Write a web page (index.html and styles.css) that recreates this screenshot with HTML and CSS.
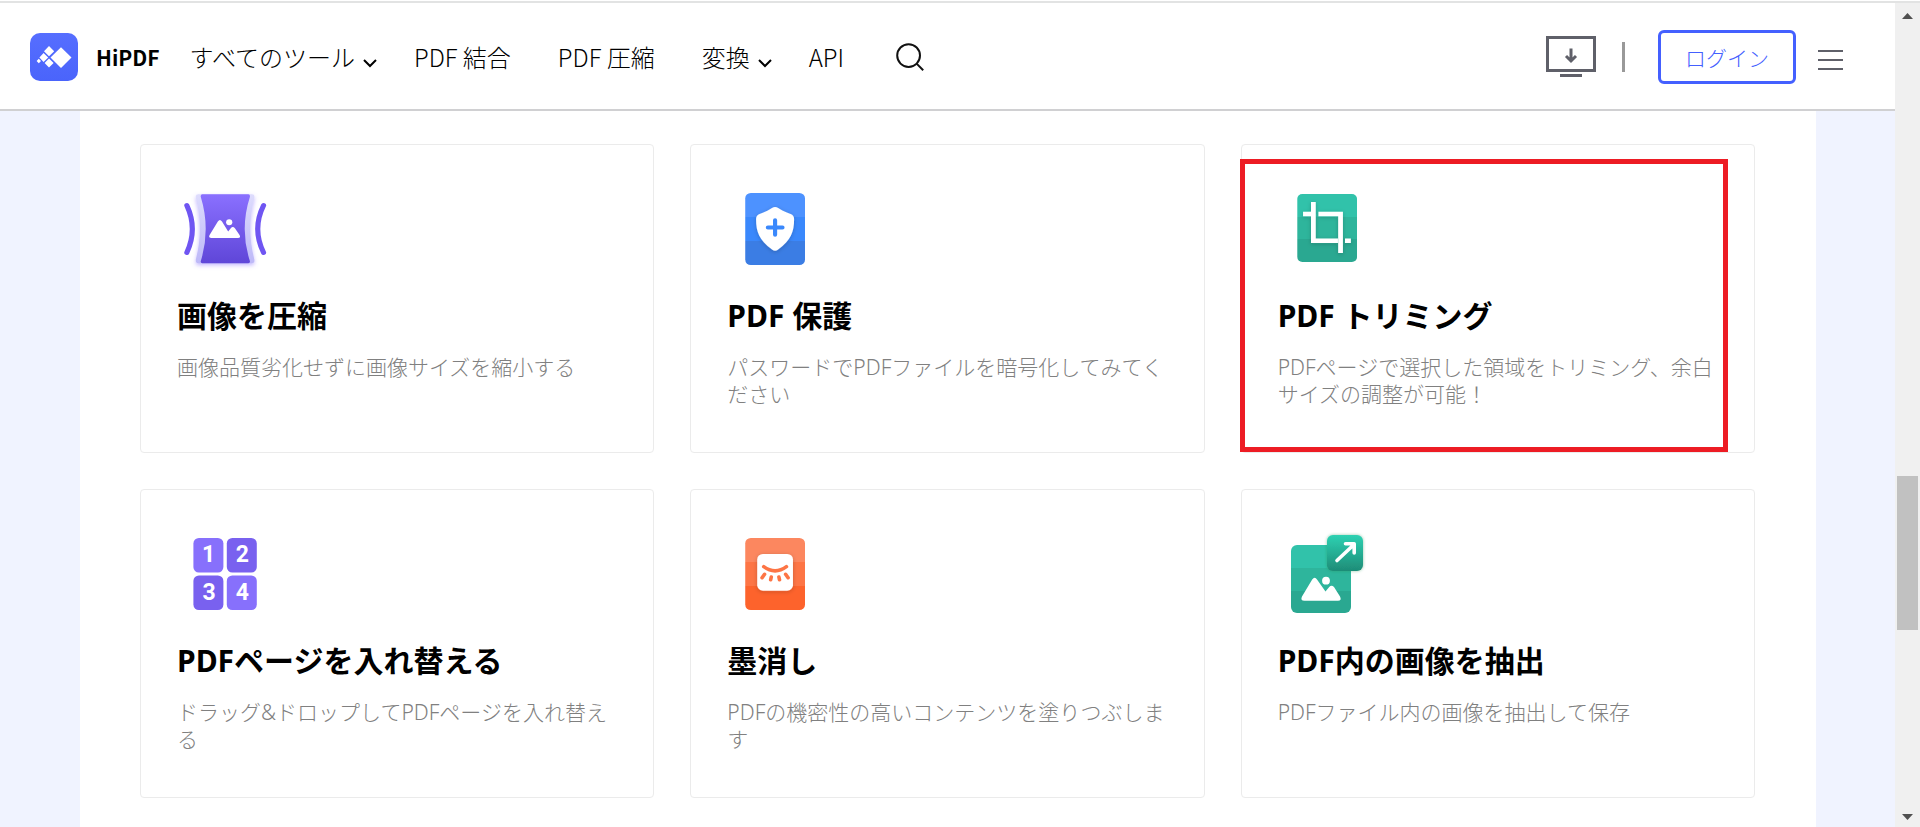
FILE: index.html
```
<!DOCTYPE html>
<html lang="ja">
<head>
<meta charset="utf-8">
<meta name="viewport" content="width=device-width, initial-scale=1">
<title>HiPDF</title>
<link rel="stylesheet" href="styles.css">
</head>
<body>
<div class="window">
  <div class="page">
    <header class="header">
      <a class="brand" href="#">
        <svg class="brand-logo" viewBox="0 0 48 48" aria-hidden="true">
          <defs><linearGradient id="logo" x1="0" y1="0" x2="0" y2="1"><stop offset="0" stop-color="#566eff"/><stop offset="1" stop-color="#4a64fb"/></linearGradient></defs>
          <rect width="48" height="48" rx="10" fill="url(#logo)"/>
          <path fill="#fff" d="M31 14.2 41.5 24.6 31 35 20.5 24.6ZM19 13 24.2 18.2 19 23.2 14 18.2ZM13.6 20 18.2 24.6 13.6 29 9.4 24.6ZM19 25.6 23.6 30 19 34.4 14.6 30ZM8.8 25.8 11 28 8.8 30.2 6.6 28Z"/>
        </svg>
        <span>HiPDF</span>
      </a>
      <nav class="nav">
        <a class="nav-link" href="#">すべてのツール<svg class="chevron" viewBox="0 0 14 9" aria-hidden="true"><path d="M1 1l6 6 6-6"/></svg></a>
        <a class="nav-link" href="#">PDF 結合</a>
        <a class="nav-link" href="#">PDF 圧縮</a>
        <a class="nav-link" href="#">変換<svg class="chevron" viewBox="0 0 14 9" aria-hidden="true"><path d="M1 1l6 6 6-6"/></svg></a>
        <a class="nav-link" href="#">API</a>
      </nav>
      <button class="icon-button search" type="button" aria-label="検索">
        <svg width="28" height="28" viewBox="0 0 28 28" fill="none" stroke="#111" stroke-width="2"><circle cx="12.6" cy="12.6" r="11.4"/><path d="M20.6 20.6l6.6 6.6"/></svg>
      </button>
      <div class="actions">
        <button class="icon-button" type="button" aria-label="ダウンロード">
          <svg width="50" height="42" viewBox="0 0 50 42" fill="none" stroke="#5f6069" stroke-width="3"><path d="M1.5 1.5h47v33h-47zM14 39.5h22"/><path d="M25 12.500v12M20 20l5 5 5-5"/></svg>
        </button>
        <span class="divider"></span>
        <button class="login" type="button">ログイン</button>
        <button class="icon-button menu" type="button" aria-label="メニュー">
          <svg width="25" height="22" viewBox="0 0 25 22" fill="#5f6069"><path d="M0 1h25v2H0zM0 10h25v2H0zM0 19h25v2H0z"/></svg>
        </button>
      </div>
    </header>

    <main class="main">
      <section class="cards">
        <article class="card">
          <svg class="card-icon" viewBox="0 0 90 90" aria-hidden="true">
            <defs>
              <linearGradient id="purple" x1="0" y1="0" x2="0" y2="1"><stop offset="0" stop-color="#8a70ff"/><stop offset="1" stop-color="#5f46d8"/></linearGradient>
              <linearGradient id="pale" x1="0" y1="0" x2="0" y2="1"><stop offset="0" stop-color="#dedcfd"/><stop offset="1" stop-color="#bdb8f8"/></linearGradient>
              <filter id="glow" x="-20%" y="-20%" width="140%" height="140%"><feDropShadow dx="0" dy="2" stdDeviation="2" flood-color="#8a70ff" flood-opacity=".5"/></filter>
            </defs>
            <g transform="translate(1.6) scale(1.033 1)">
              <path fill="url(#pale)" filter="url(#glow)" d="M19 10.300H71Q74 10.300 73.200 14Q65.600 45 73.200 75Q74 79.300 71 79.300H19Q16 79.300 16.800 75Q24.400 45 16.800 14Q16 10.300 19 10.300Z"/>
              <path fill="url(#purple)" d="M23 10.300H67.500Q69.500 10.300 69 13Q59 45 69 77Q69.500 79.300 67.500 79.300H23Q21 79.300 21.500 77Q31 45 21.500 13Q21 10.300 23 10.300Z"/>
              <path fill="none" stroke="#6f55f2" stroke-width="5" stroke-linecap="round" d="M8 21.500Q18.600 45 8 68.500M82.200 21.500Q71 45 82.200 68.500"/>
              <path fill="#fff" d="M38 37.500Q40 34.500 42 37.500L48 47.500 50.500 44.200Q52.500 42 54.500 44.200L59 51Q60.500 54 57.500 54H32Q28.500 54 30 51Z"/><circle cx="49" cy="38.300" r="3" fill="#fff"/>
            </g>
          </svg>
          <h2 class="card-title">画像を圧縮</h2>
          <p class="card-text">画像品質劣化せずに画像サイズを縮小する</p>
        </article>

        <article class="card">
          <svg class="card-icon" viewBox="0 0 90 90" aria-hidden="true">
            <defs>
              <clipPath id="sheet"><rect x="16" y="9" width="58" height="72" rx="5.500"/></clipPath>
              <filter id="shade" x="-30%" y="-30%" width="160%" height="160%"><feDropShadow dx="0" dy="1" stdDeviation="2" flood-color="#222" flood-opacity=".2"/></filter>
            </defs>
            <g transform="translate(1.6) scale(1.033 1)">
              <g clip-path="url(#sheet)"><path fill="#4d92ff" d="M16 9h58v24H16z"/><path fill="#3a88fc" d="M16 33h58v24H16z"/><path fill="#3b7de4" d="M16 57h58v24H16z"/></g>
              <path fill="#fff" filter="url(#shade)" d="M42 24Q45 22 48 24L52 26.500Q55.500 28.400 60 30Q63.400 31.400 63.400 35C63.400 48 60.500 56 48 65.500Q45 68 42 65.500C29.500 56 26.600 48 26.600 35Q26.600 31.400 30 30Q34.500 28.400 38 26.500Z"/>
              <path stroke="#3a88fc" stroke-width="4" stroke-linecap="round" d="M38 43.500H52.200M45 36.300V50.700"/>
            </g>
          </svg>
          <h2 class="card-title">PDF 保護</h2>
          <p class="card-text">パスワードでPDFファイルを暗号化してみてください</p>
        </article>

        <article class="card card-marked">
          <svg class="card-icon" viewBox="0 0 90 90" aria-hidden="true">
            <defs><clipPath id="sheet-crop"><rect x="17" y="10" width="58" height="68" rx="5"/></clipPath></defs>
            <g transform="translate(1.6) scale(1.033 1)">
              <g clip-path="url(#sheet-crop)"><path fill="#31c2aa" d="M17 10h58v23H17z"/><path fill="#2eb59c" d="M17 33h58v22H17z"/><path fill="#2aa891" d="M17 55h58v23H17z"/></g>
              <path fill="none" stroke="#fff" stroke-width="4.600" filter="url(#shade)" d="M32.700 18V56.700H56.500M22.700 30H32M37.600 30H59V69M63.300 56.700H69"/>
            </g>
          </svg>
          <h2 class="card-title">PDF トリミング</h2>
          <p class="card-text">PDFページで選択した領域をトリミング、余白サイズの調整が可能！</p>
        </article>

        <article class="card">
          <svg class="card-icon" viewBox="0 0 90 90" aria-hidden="true">
            <g fill="#8770fc"><rect x="16.400" y="9" width="30" height="34.500" rx="5.500"/><rect x="49.800" y="46.500" width="30" height="34.500" rx="5.500"/></g>
            <g fill="#7961ef"><rect x="49.800" y="9" width="30" height="34.500" rx="5.500"/><rect x="16.400" y="46.500" width="30" height="34.500" rx="5.500"/></g>
            <g class="tile-digit"><text x="31.500" y="33">1</text><text x="65.300" y="33">2</text><text x="32" y="70.500">3</text><text x="65.300" y="70.500">4</text></g>
          </svg>
          <h2 class="card-title">PDFページを入れ替える</h2>
          <p class="card-text">ドラッグ&amp;ドロップしてPDFページを入れ替える</p>
        </article>

        <article class="card">
          <svg class="card-icon" viewBox="0 0 90 90" aria-hidden="true">
            <g transform="translate(1.6) scale(1.033 1)">
              <g clip-path="url(#sheet)"><path fill="#fc875f" d="M16 9h58v24H16z"/><path fill="#fd7545" d="M16 33h58v24H16z"/><path fill="#fd632c" d="M16 57h58v24H16z"/></g>
              <rect x="27.700" y="25" width="34.600" height="36.700" rx="5.500" fill="#fff" filter="url(#shade)"/>
              <path fill="none" stroke="#fd7545" stroke-width="3.500" stroke-linecap="round" d="M34 37.700Q45 46 56 37.700M34.800 45.300L32.400 48.700M41.300 48L40.700 50.800M48.700 48L49.300 50.800M55.200 45.300L57.600 48.700"/>
            </g>
          </svg>
          <h2 class="card-title">墨消し</h2>
          <p class="card-text">PDFの機密性の高いコンテンツを塗りつぶします</p>
        </article>

        <article class="card">
          <svg class="card-icon" viewBox="0 0 90 90" aria-hidden="true">
            <defs>
              <clipPath id="sheet-extract"><rect x="13" y="16" width="60" height="68" rx="6"/></clipPath>
              <linearGradient id="green" x1="0" y1="0" x2="0" y2="1"><stop offset="0" stop-color="#2dd1b2"/><stop offset="1" stop-color="#1e8c77"/></linearGradient>
              <filter id="green-glow" x="-30%" y="-30%" width="160%" height="160%"><feDropShadow dx="0" dy="0" stdDeviation="1.800" flood-color="#1e8c50" flood-opacity=".5"/></filter>
            </defs>
            <g clip-path="url(#sheet-extract)"><path fill="#31c2aa" d="M13 16h60v23H13z"/><path fill="#2eb59c" d="M13 39h60v23H13z"/><path fill="#2aa891" d="M13 62h60v22H13z"/></g>
            <rect x="49" y="6" width="36" height="36" rx="6" fill="url(#green)" filter="url(#green-glow)"/>
            <path fill="none" stroke="#fff" stroke-width="3.600" stroke-linecap="round" stroke-linejoin="round" d="M59 31.500L76 15.500M67.500 14.800H76.200V24"/>
            <path fill="#fff" d="M34.200 50.500Q36.700 47 39 50.500L47.500 62.500 51.200 58Q53.500 55.500 56 58L62 67.500Q64 71.700 60 71.700H26.500Q22 71.700 24 67.500Z"/><circle cx="48" cy="51.700" r="3.900" fill="#fff"/>
          </svg>
          <h2 class="card-title">PDF内の画像を抽出</h2>
          <p class="card-text">PDFファイル内の画像を抽出して保存</p>
        </article>
      </section>
    </main>
  </div>

  <div class="scrollbar" aria-hidden="true">
    <svg class="scroll-arrow" viewBox="0 0 11 6"><path d="M0 6L5.500 0 11 6z"/></svg>
    <div class="scroll-before"></div>
    <div class="scroll-thumb"></div>
    <div class="scroll-after"></div>
    <svg class="scroll-arrow" viewBox="0 0 11 6"><path d="M0 0L5.500 6 11 0z"/></svg>
  </div>
</div>
</body>
</html>
```

FILE: styles.css
```
* {
  box-sizing: border-box;
}

body {
  margin: 0;
  background: #fff;
  color: #000;
  font-family: "Noto Sans", "Noto Sans CJK JP", sans-serif;
}

button {
  font: inherit;
  cursor: pointer;
}

.window {
  display: flex;
  height: 100vh;
  padding-top: 1px;
}

.window > * {
  border-top: 2px solid #e2e3e3;
}

.page {
  display: flex;
  flex: 1;
  flex-direction: column;
  min-width: 0;
  overflow: hidden;
}

/* Header */

.header {
  display: flex;
  flex: none;
  align-items: center;
  height: 108px;
  padding: 2px 52px 0 30px;
  border-bottom: 2px solid #d0d0d2;
  background: #fff;
  font-family: "Noto Sans CJK JP", sans-serif;
}

.brand {
  display: flex;
  align-items: center;
  gap: 18px;
  color: #000;
  font-size: 21px;
  font-weight: 700;
  text-decoration: none;
}

.brand-logo {
  width: 48px;
  height: 48px;
}

.nav {
  display: flex;
  gap: 47px;
  margin-left: 30px;
}

.nav-link {
  display: flex;
  align-items: center;
  gap: 8px;
  color: #000;
  font-size: 24px;
  font-weight: 300;
  line-height: 36px;
  text-decoration: none;
  white-space: nowrap;
}

.nav-link:has(.chevron) {
  margin-right: -10px;
}

.chevron {
  width: 14px;
  height: 9px;
  margin-top: 12px;
  fill: none;
  stroke: #000;
  stroke-width: 2;
}

.icon-button {
  display: flex;
  padding: 0;
  border: 0;
  background: none;
}

.search {
  margin-left: 52px;
}

.actions {
  display: flex;
  align-items: center;
  margin-left: auto;
}

.divider {
  width: 3px;
  height: 30px;
  margin: 0 33px 0 26px;
  background: #999;
}

.login {
  width: 138px;
  height: 54px;
  padding: 0;
  border: 3px solid #4460ff;
  border-radius: 6px;
  background: #fff;
  color: #4460ff;
  font-size: 21px;
  font-weight: 300;
}

.menu {
  margin-top: 6px;
  margin-left: 22px;
}

/* Tool cards */

.main {
  flex: 1;
  min-height: 0;
  padding: 0 79px 0 80px;
  background: #f0f3ff;
}

.cards {
  display: grid;
  grid-template-columns: repeat(3, 1fr);
  align-content: start;
  gap: 36px;
  height: 100%;
  padding: 33px 61px 0 60px;
  background: #fff;
}

.card {
  position: relative;
  padding: 39px 32px 44px 36px;
  border: 1px solid #ebebeb;
  border-radius: 4px;
}

.card-marked::after {
  position: absolute;
  top: 14px;
  right: 26px;
  bottom: 0;
  left: -2px;
  border: 5px solid #ed1c24;
  content: "";
}

.card-icon {
  display: block;
  width: 90px;
  height: 90px;
}

.tile-digit {
  fill: #fff;
  font-family: Roboto, sans-serif;
  font-size: 23px;
  font-weight: 700;
  text-anchor: middle;
}

.card-title {
  margin: 22px 0 18px;
  font-size: 30px;
  font-weight: 700;
  line-height: 40px;
}

.card-text {
  min-height: 54px;
  margin: 0;
  color: #808080;
  font-size: 21px;
  font-weight: 300;
  line-height: 27px;
}

/* Scrollbar */

.scrollbar {
  display: flex;
  flex: none;
  flex-direction: column;
  align-items: center;
  width: 25px;
  padding: 10px 0 7px;
  background: #f0f0f0;
}

.scroll-arrow {
  flex: none;
  width: 11px;
  height: 6px;
  fill: #505050;
}

.scroll-before {
  flex: 457;
}

.scroll-thumb {
  flex: 154;
  width: 21px;
  background: #c1c1c1;
}

.scroll-after {
  flex: 184;
}
```
